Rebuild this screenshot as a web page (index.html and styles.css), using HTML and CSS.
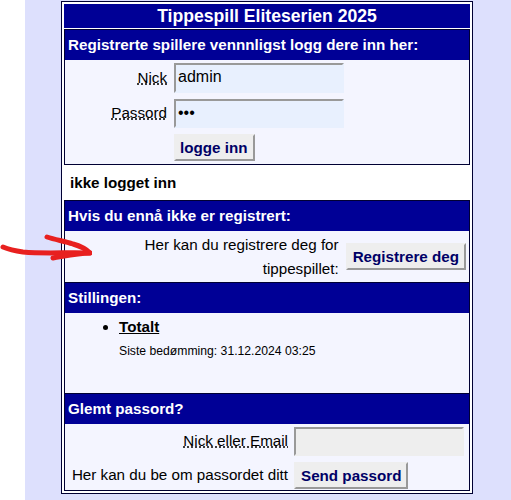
FILE: index.html
```html
<!DOCTYPE html>
<html lang="en">
<head>
    <meta charset="UTF-8">
    <meta name="viewport" content="width=device-width, initial-scale=1.0">
    <title>Tippespill Eliteserien 2025</title>
    <link rel="stylesheet" href="styles.css">
</head>
<body>
    <div id="page">
        <div id="main">
            <h1 class="title">Tippespill Eliteserien 2025</h1>

            <!-- Login -->
            <div class="section login">
                <h2>Registrerte spillere vennnligst logg dere inn her:</h2>
                <form class="form-grid login-grid">
                    <label for="nick" class="field-label"><abbr>Nick</abbr></label>
                    <input type="text" id="nick" class="autofilled tall" value="admin">
                    <label for="passord" class="field-label"><abbr>Passord</abbr></label>
                    <input type="password" id="passord" class="autofilled" value="abc">
                    <span></span>
                    <button type="button">logge inn</button>
                </form>
            </div>

            <p class="status">ikke logget inn</p>

            <!-- Register -->
            <div class="section register">
                <h2>Hvis du ennå ikke er registrert:</h2>
                <div class="register-row">
                    <p>Her kan du registrere deg for tippespillet:</p>
                    <button type="button">Registrere deg</button>
                </div>
            </div>

            <!-- Standings -->
            <div class="section standings">
                <h2>Stillingen:</h2>
                <ul>
                    <li>
                        <a href="#">Totalt</a>
                        <small>Siste bedømming: 31.12.2024 03:25</small>
                    </li>
                </ul>
            </div>

            <!-- Forgotten password -->
            <div class="section forgot">
                <h2>Glemt passord?</h2>
                <form class="form-grid forgot-grid">
                    <label for="email" class="field-label"><abbr>Nick eller Email</abbr></label>
                    <input type="text" id="email">
                    <span class="field-label">Her kan du be om passordet ditt</span>
                    <button type="button">Send passord</button>
                </form>
            </div>
        </div>

        <svg class="arrow" width="92" height="32" viewBox="0 0 92 32">
            <path d="M3 17 C10 20 16 21 23 22 C45 24 70 22 90 23" />
            <path d="M47 7 C56 10 64 11 73 14 C80 16 86 19 90 23 C78 23 65 26 53 28" />
        </svg>
    </div>
</body>
</html>
```

FILE: styles.css
```css
html, body {
    margin: 0;
    height: 500px;
    overflow: hidden;
}

body {
    font-family: "Liberation Sans", Arial, sans-serif;
    font-size: 15.2px;
    background-color: #fff;
    color: #000;
}

#page {
    position: relative;
    margin-left: 25px;
    height: 500px;
    padding-top: 1px;
    box-sizing: border-box;
    background-color: #dde0fd;
}

#main {
    width: 412px;
    margin-left: 36px;
    box-sizing: border-box;
    height: 493px;
    padding: 2px;
    border: 1px solid #000033;
    background-color: #fff;
    display: flex;
    flex-direction: column;
}

.title {
    margin: 0 0 1px;
    height: 24px;
    line-height: 24px;
    font-size: 17.6px;
    text-align: center;
    color: #fff;
    background-color: #000096;
}

.section {
    border: 1px solid #000033;
    border-bottom-width: 0;
    background-color: #f4f5ff;
}

.section h2 {
    margin: 0;
    height: 30px;
    line-height: 30px;
    padding-left: 3px;
    font-size: 15.2px;
    color: #fff;
    background-color: #000096;
}

.login {
    height: 136px;
    box-sizing: border-box;
    border-bottom-width: 1px;
}

.status {
    margin: 0;
    height: 35px;
    line-height: 35px;
    padding-left: 6px;
    font-size: 15.2px;
    font-weight: bold;
}

.register {
    height: 82px;
    box-sizing: border-box;
}

.standings {
    height: 111px;
    box-sizing: border-box;
}

.forgot {
    flex: 1;
    border-bottom-width: 1px;
}

.form-grid {
    display: grid;
    align-items: center;
    justify-items: start;
}

.login-grid {
    grid-template-columns: 102px 170px;
    column-gap: 7px;
    row-gap: 6px;
    padding-top: 3px;
}

.forgot-grid {
    grid-template-columns: 223px 170px;
    column-gap: 6px;
    row-gap: 6px;
    padding-top: 3px;
}

.field-label {
    justify-self: end;
    white-space: nowrap;
    padding-bottom: 2px;
}

abbr {
    text-decoration: underline dotted;
}

input {
    width: 170px;
    height: 29px;
    box-sizing: border-box;
    padding: 0 2px 2px;
    font-family: "Liberation Sans", Arial, sans-serif;
    font-size: 16px;
    background-color: #eeeeee;
    border: 2px solid #eeeeee;
    border-top-color: #999;
    border-left-color: #999;
}

input.autofilled {
    background-color: #e8f0fe;
    border-right-color: #e8f0fe;
    border-bottom-color: #e8f0fe;
}

input.tall {
    height: 30px;
}

button {
    height: 27px;
    padding: 0 5px;
    font-family: "Liberation Sans", Arial, sans-serif;
    font-size: 15.2px;
    font-weight: bold;
    color: #000066;
    background-color: #eeeeee;
    border: 2px solid #eeeeee;
    border-right-color: #999;
    border-bottom-color: #999;
}

.login-grid button {
    padding: 0 5px 0 4px;
}

.register-row {
    display: flex;
    align-items: center;
    justify-content: flex-end;
    gap: 7px;
    padding: 0 3px 0 0;
    height: 51px;
}

.register-row p {
    margin: 0;
    width: 240px;
    line-height: 24px;
    text-align: right;
}

.standings ul {
    margin: 0;
    padding: 5px 0 0 54px;
}

.standings a {
    font-size: 15.2px;
    font-weight: bold;
    color: #000;
}

.standings small {
    display: block;
    margin-top: 9px;
    font-size: 12.2px;
}

.arrow {
    position: absolute;
    left: -25px;
    top: 230px;
    fill: none;
    stroke: #e8201f;
    stroke-width: 5;
    stroke-linecap: round;
    stroke-linejoin: round;
}
```
